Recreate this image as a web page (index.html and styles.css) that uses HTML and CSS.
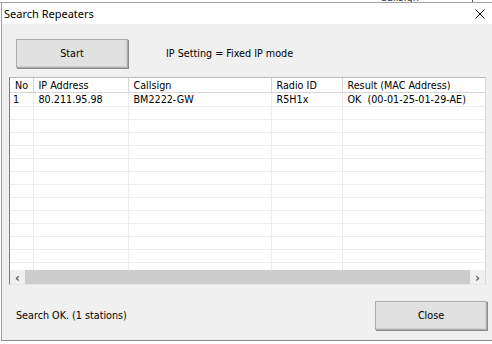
FILE: index.html
```html
<!DOCTYPE html>
<html>
<head>
  <title>Search Repeaters</title>
  <link rel="stylesheet" href="styles.css">
</head>
<body>

  <!-- Window behind the dialog -->
  <div class="backdrop">
    <span class="backdropText">Callsign</span>
    <span class="backdropLine"></span>
  </div>

  <div class="window">
    <!-- Title bar -->
    <div class="titlebar">
      <span class="title">Search Repeaters</span>
      <svg class="closeIcon" width="10" height="10" viewBox="0 0 10 10">
        <path d="M0.5 0.5 L9.5 9.5 M9.5 0.5 L0.5 9.5" stroke="#000" stroke-width="1"/>
      </svg>
    </div>

    <div class="dialog">
      <div class="toolbar">
        <button class="btn" id="startBtn">Start</button>
        <span class="ipSetting">IP Setting = Fixed IP mode</span>
      </div>

      <!-- List view -->
      <div class="listview">
        <div class="listScroll">
          <table class="grid">
            <colgroup>
              <col class="colNo">
              <col class="colIp">
              <col class="colCall">
              <col class="colRadio">
              <col class="colResult">
            </colgroup>
            <thead>
              <tr>
                <th>No</th>
                <th>IP Address</th>
                <th>Callsign</th>
                <th>Radio ID</th>
                <th>Result (MAC Address)</th>
              </tr>
            </thead>
            <tbody id="rows">
              <tr>
                <td>1</td>
                <td>80.211.95.98</td>
                <td>BM2222-GW</td>
                <td>R5H1x</td>
                <td>OK&nbsp; (00-01-25-01-29-AE)</td>
              </tr>
            </tbody>
          </table>
        </div>
        <div class="hscroll">
          <span class="arrow">&lsaquo;</span>
          <span class="thumb"></span>
          <span class="arrow">&rsaquo;</span>
        </div>
      </div>

      <div class="footer">
        <span class="status">Search OK. (1 stations)</span>
        <button class="btn" id="closeBtn">Close</button>
      </div>
    </div>
  </div>

  <script>
    // fill the empty grid lines below the first row
    var rows = document.getElementById("rows");
    for (var i = 0; i < 13; i++) {
      var tr = document.createElement("tr");
      for (var j = 0; j < 5; j++) {
        tr.appendChild(document.createElement("td"));
      }
      rows.appendChild(tr);
    }
  </script>

</body>
</html>
```

FILE: styles.css
```css
body {
  margin: 0;
  width: 492px;
  height: 344px;
  overflow: hidden;
  background-color: white;
  font-family: "DejaVu Sans", sans-serif;
  font-stretch: condensed;
  font-size: 10.7px;
  color: black;
}
.backdrop {
  height: 2px;
  border-bottom: 1px solid #a0a0a0;
  overflow: hidden;
  display: flex;
  align-items: flex-end;
  padding-left: 380px;
}
.backdropText {
  font-size: 11px;
  line-height: 8px;
  color: #333;
  width: 92px;
}
.backdropLine {
  width: 1px;
  height: 3px;
  background: #555;
}
.window {
  margin-left: 1px;
  border-left: 1px solid #a0a0a0;
  border-bottom: 1px solid #8a8a8a;
  height: 337px;
  display: flex;
  flex-direction: column;
  background-color: #f0f0f0;
}
.titlebar {
  height: 21px;
  flex: none;
  background-color: white;
  display: flex;
  align-items: center;
  justify-content: space-between;
  padding: 0 7px 0 2px;
}
.title {
  font-family: "Noto Sans", sans-serif;
  font-stretch: normal;
  font-size: 11px;
}
.dialog {
  flex: 1;
  display: flex;
  flex-direction: column;
}
.toolbar {
  display: flex;
  align-items: center;
  margin: 15px 0 0 14px;
}
.btn {
  font: inherit;
  width: 112px;
  height: 29px;
  padding: 0;
  background-color: #e1e1e1;
  border: 1px solid #adadad;
  box-shadow: inset -1px -1px 0 #d0d0d0, 1px 1px 0 #8c8c8c;
  color: black;
}
.ipSetting {
  margin-left: 38px;
}
/* list view */
.listview {
  margin: 9px 0 0 7px;
  width: 475px;
  height: 206px;
  border-left: 1px solid #7a7a7a;
  border-top: 1px solid #b8b8b8;
  border-right: 1px solid #d8d8d8;
  border-bottom: 1px solid #e6e6e6;
  background-color: white;
  display: flex;
  flex-direction: column;
}
.listScroll {
  flex: 1;
  overflow: hidden;
}
.grid {
  border-collapse: collapse;
  table-layout: fixed;
  width: 475px;
}
.colNo { width: 23px; }
.colIp { width: 95px; }
.colCall { width: 143px; }
.colRadio { width: 71px; }
.colResult { width: 143px; }
.grid th {
  height: 14px;
  padding: 0 0 0 5px;
  text-align: left;
  font-weight: normal;
  background-color: white;
  border-right: 1px solid #d5d5d5;
  border-bottom: 1px solid #d5d5d5;
  white-space: nowrap;
}
.grid td {
  height: 12px;
  padding: 0 0 0 5px;
  border-right: 1px solid #ececec;
  border-bottom: 1px solid #ececec;
  white-space: nowrap;
  overflow: hidden;
}
.grid td:first-child {
  padding-left: 3px;
}
.hscroll {
  height: 14px;
  flex: none;
  display: flex;
  align-items: center;
  background-color: #f0f0f0;
}
.arrow {
  width: 15px;
  text-align: center;
  font-size: 13px;
  font-weight: bold;
  color: #606060;
}
.thumb {
  flex: 1;
  height: 14px;
  background-color: #cdcdcd;
}
.footer {
  display: flex;
  align-items: center;
  justify-content: space-between;
  margin: 16px 5px 0 14px;
}
```
